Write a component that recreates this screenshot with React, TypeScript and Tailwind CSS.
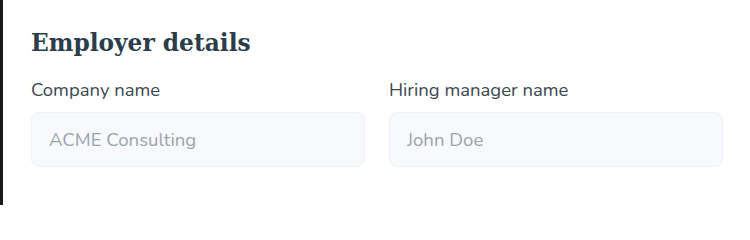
export default function App() {
  return (
    <div className="h-[205px] w-[750px] border-l-[3px] border-[#1a1a1a] bg-white pl-[28px] pr-[27px] pt-[27px]">
      <h2 className="font-['DejaVu_Serif',serif] text-[23.3px] font-bold leading-[32px] text-[#2b3d4a]">
        Employer details
      </h2>
      <div className="mt-[18px] grid grid-cols-2 gap-[24px]">
        <Field label="Company name" placeholder="ACME Consulting" />
        <Field label="Hiring manager name" placeholder="John Doe" />
      </div>
    </div>
  );
}

function Field({ label, placeholder }: { label: string; placeholder: string }) {
  return (
    <label className="flex flex-col font-['Nunito','Lato',sans-serif]">
      <span className="text-[18.5px] leading-[26px] text-[#3a4750]">{label}</span>
      <input
        className="mt-[9px] h-[55px] rounded-[8px] border border-[#eef1f5] bg-[#f7f9fc] px-[17px] text-[18.6px] text-[#3a4750] outline-none placeholder:text-[#9aa3ab]"
        placeholder={placeholder}
      />
    </label>
  );
}
